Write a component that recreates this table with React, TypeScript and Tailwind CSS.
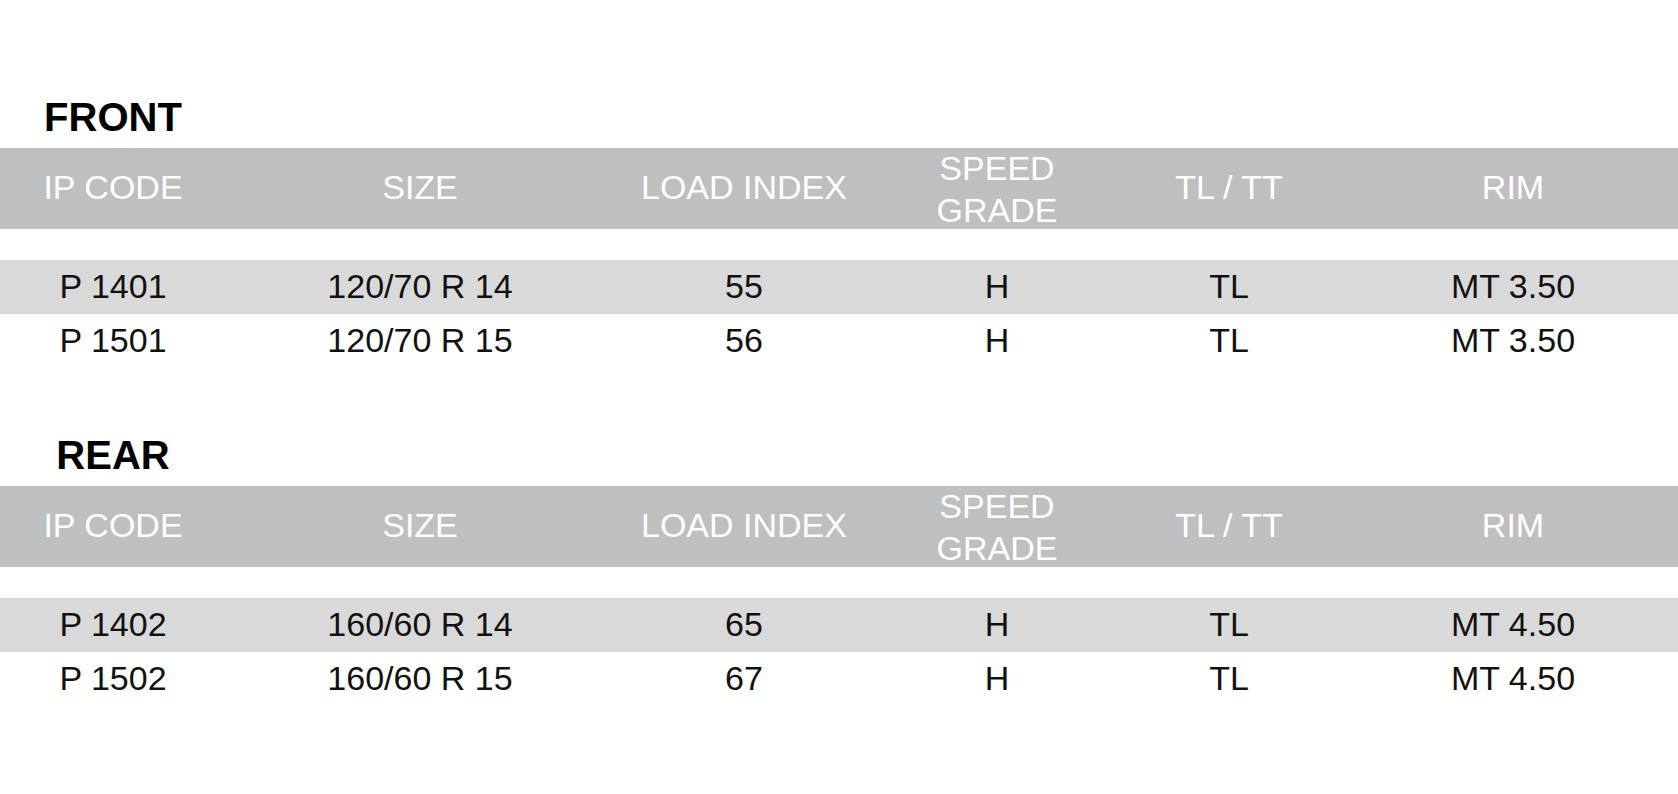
import React from "react";

const widths = ["w-[226px]", "w-[388px]", "w-[260px]", "w-[246px]", "w-[218px]", "w-[340px] pl-[10px]"];

type Row = [string, string, string, string, string, string];

function Section({ title, rows, first }: { title: string; rows: Row[]; first?: boolean }) {
  return (
    <div className={first ? "" : "mt-[63px]"}>
      <div className="flex">
        <div className="w-[226px] text-center text-[40px] leading-[48px] font-bold text-black">{title}</div>
      </div>
      <div className="mt-[7px] flex h-[81px] items-center bg-[#bfbfbf] text-[34px] text-white">
        <div className={`${widths[0]} pb-[4px] text-center leading-[40px]`}>IP CODE</div>
        <div className={`${widths[1]} pb-[4px] text-center leading-[40px]`}>SIZE</div>
        <div className={`${widths[2]} pb-[4px] text-center leading-[40px]`}>LOAD INDEX</div>
        <div className={`${widths[3]} text-center leading-[42px]`}>
          SPEED
          <br />
          GRADE
        </div>
        <div className={`${widths[4]} pb-[4px] text-center leading-[40px]`}>TL / TT</div>
        <div className={`${widths[5]} pb-[4px] text-center leading-[40px]`}>RIM</div>
      </div>
      <div className="mt-[31px]">
        {rows.map((r, i) => (
          <div
            key={i}
            className={`flex h-[54px] items-center pb-[2px] text-[34px] text-[#111] ${i % 2 === 0 ? "bg-[#d9d9d9]" : "bg-white"}`}
          >
            {r.map((c, j) => (
              <div key={j} className={`${widths[j]} text-center leading-[40px]`}>
                {c}
              </div>
            ))}
          </div>
        ))}
      </div>
    </div>
  );
}

export default function App() {
  return (
    <div
      className="h-[794px] w-[1678px] overflow-hidden bg-white pt-[93px]"
      style={{ fontFamily: '"Liberation Sans", Arial, sans-serif' }}
    >
      <Section
        first
        title="FRONT"
        rows={[
          ["P 1401", "120/70 R 14", "55", "H", "TL", "MT 3.50"],
          ["P 1501", "120/70 R 15", "56", "H", "TL", "MT 3.50"],
        ]}
      />
      <Section
        title="REAR"
        rows={[
          ["P 1402", "160/60 R 14", "65", "H", "TL", "MT 4.50"],
          ["P 1502", "160/60 R 15", "67", "H", "TL", "MT 4.50"],
        ]}
      />
    </div>
  );
}
